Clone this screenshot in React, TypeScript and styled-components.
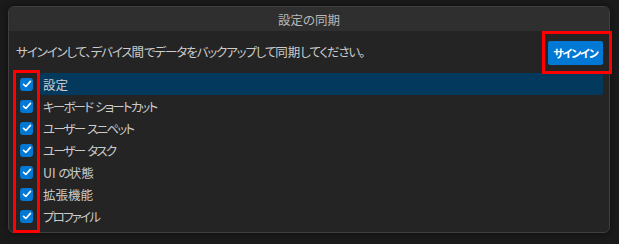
import styled, { createGlobalStyle } from "styled-components";

// 同期する項目
const syncItems = [
  { id: "settings", label: "設定", selected: true },
  { id: "keybindings", label: "キーボード ショートカット", selected: false },
  { id: "snippets", label: "ユーザー スニペット", selected: false },
  { id: "tasks", label: "ユーザー タスク", selected: false },
  { id: "uiState", label: "UI の状態", selected: false },
  { id: "extensions", label: "拡張機能", selected: false },
  { id: "profiles", label: "プロファイル", selected: false },
];

// かなの連続部分を切り出して詰める (UI フォントのかなは幅が狭いため)
const KANA_RUN = /^[\u3040-\u30ff、。]+$/;
const SPLIT = /([\u3040-\u30ff、。]+| )/;

const Tight: React.FC<{ text: string; spacing: number }> = ({ text, spacing }) => {
  const parts = text.split(SPLIT);
  return (
    <>
      {parts.map((part, i) => {
        if (part === " ") {
          const afterKana = i > 0 && KANA_RUN.test(parts[i - 1]);
          return (
            <WordGap key={i} $afterKana={afterKana}>
              {" "}
            </WordGap>
          );
        }
        if (KANA_RUN.test(part))
          return (
            <Kana key={i} $spacing={spacing}>
              {part}
            </Kana>
          );
        return part;
      })}
    </>
  );
};

const GlobalStyle = createGlobalStyle`
  html, body {
    margin: 0;
    padding: 0;
    background: #1b1b1b;
  }
  body {
    font-family: "Noto Sans CJK JP", "Noto Sans", sans-serif;
    font-feature-settings: "palt";
  }
`;

const CheckIcon = () => (
  <svg width="10" height="10" viewBox="0 0 16 16" fill="none">
    <path
      d="M2.5 8.5 L6.2 12 L13.5 3.8"
      stroke="#ffffff"
      strokeWidth="2.6"
      strokeLinecap="round"
      strokeLinejoin="round"
    />
  </svg>
);

const App: React.FC = () => {
  return (
    <>
      <GlobalStyle />
      <Page>
        <Dialog>
          <TitleBar>設定の同期</TitleBar>
          <Body>
            <MessageRow>
              <Message>
                <Tight
                  text="サインインして、デバイス間でデータをバックアップして同期してください。"
                  spacing={-1.1}
                />
              </Message>
              <SignInButton>
                <Tight text="サインイン" spacing={-1.2} />
              </SignInButton>
            </MessageRow>
            <ItemList>
              {syncItems.map((item) => (
                <ItemRow key={item.id}>
                  <CheckCell>
                    <CheckBox>
                      <CheckIcon />
                    </CheckBox>
                  </CheckCell>
                  <ItemLabel $selected={item.selected}>
                    <Tight text={item.label} spacing={-1.8} />
                  </ItemLabel>
                </ItemRow>
              ))}
            </ItemList>
          </Body>
          <Highlight $left={4} $top={63} $width={27} $height={163} />
          <Highlight $left={533} $top={24} $width={70} $height={43} />
        </Dialog>
      </Page>
    </>
  );
};

// スタイル
const Page = styled.div`
  width: 619px;
  height: 244px;
  padding: 6px 9px 0 8px;
  box-sizing: border-box;
`;

const Dialog = styled.div`
  position: relative;
  width: 602px;
  height: 227px;
  box-sizing: border-box;
  background: #242424;
  border: 1px solid #3f3f3f;
  border-radius: 6px;
  box-shadow: 0 0 8px rgba(0, 0, 0, 0.5);
`;

const TitleBar = styled.div`
  height: 24px;
  background: #2f2f2f;
  border-radius: 5px 5px 0 0;
  display: flex;
  align-items: center;
  justify-content: center;
  color: #b8b8b8;
  font-size: 12.5px;
`;

const Body = styled.div`
  padding: 0 6px 0 7px;
`;

const MessageRow = styled.div`
  display: flex;
  align-items: center;
  justify-content: space-between;
  height: 41px;
  padding-bottom: 1px;
`;

const Message = styled.span`
  color: #cccccc;
  font-size: 12.5px;
  white-space: nowrap;
`;

const Kana = styled.span<{ $spacing: number }>`
  letter-spacing: ${(p) => p.$spacing}px;
`;

const WordGap = styled.span<{ $afterKana: boolean }>`
  padding-left: ${(p) => (p.$afterKana ? 3 : 0)}px;
`;

const SignInButton = styled.button`
  width: 55px;
  height: 24px;
  margin-top: 2px;
  padding: 0;
  border: none;
  border-radius: 2px;
  background: #0078d4;
  color: #ffffff;
  font-family: inherit;
  font-feature-settings: "palt";
  font-size: 11px;
  font-weight: bold;
  white-space: nowrap;
  cursor: pointer;
`;

const ItemList = styled.ul`
  list-style: none;
  margin: 0;
  padding: 0;
`;

const ItemRow = styled.li`
  display: flex;
  height: 22px;
`;

const CheckCell = styled.div`
  width: 24px;
  display: flex;
  align-items: center;
  padding-left: 4px;
  box-sizing: border-box;
`;

const CheckBox = styled.span`
  width: 13px;
  height: 13px;
  border-radius: 3px;
  background: #0078d4;
  display: flex;
  align-items: center;
  justify-content: center;
`;

const ItemLabel = styled.div<{ $selected: boolean }>`
  flex: 1;
  display: flex;
  align-items: center;
  padding-left: 3px;
  border-radius: 3px;
  background: ${(p) => (p.$selected ? "#04395e" : "transparent")};
  color: #cccccc;
  font-size: 12.5px;
  white-space: pre;
`;

const Highlight = styled.div<{ $left: number; $top: number; $width: number; $height: number }>`
  position: absolute;
  left: ${(p) => p.$left}px;
  top: ${(p) => p.$top}px;
  width: ${(p) => p.$width}px;
  height: ${(p) => p.$height}px;
  box-sizing: border-box;
  border: 3px solid #ff0000;
  pointer-events: none;
`;

export default App;
